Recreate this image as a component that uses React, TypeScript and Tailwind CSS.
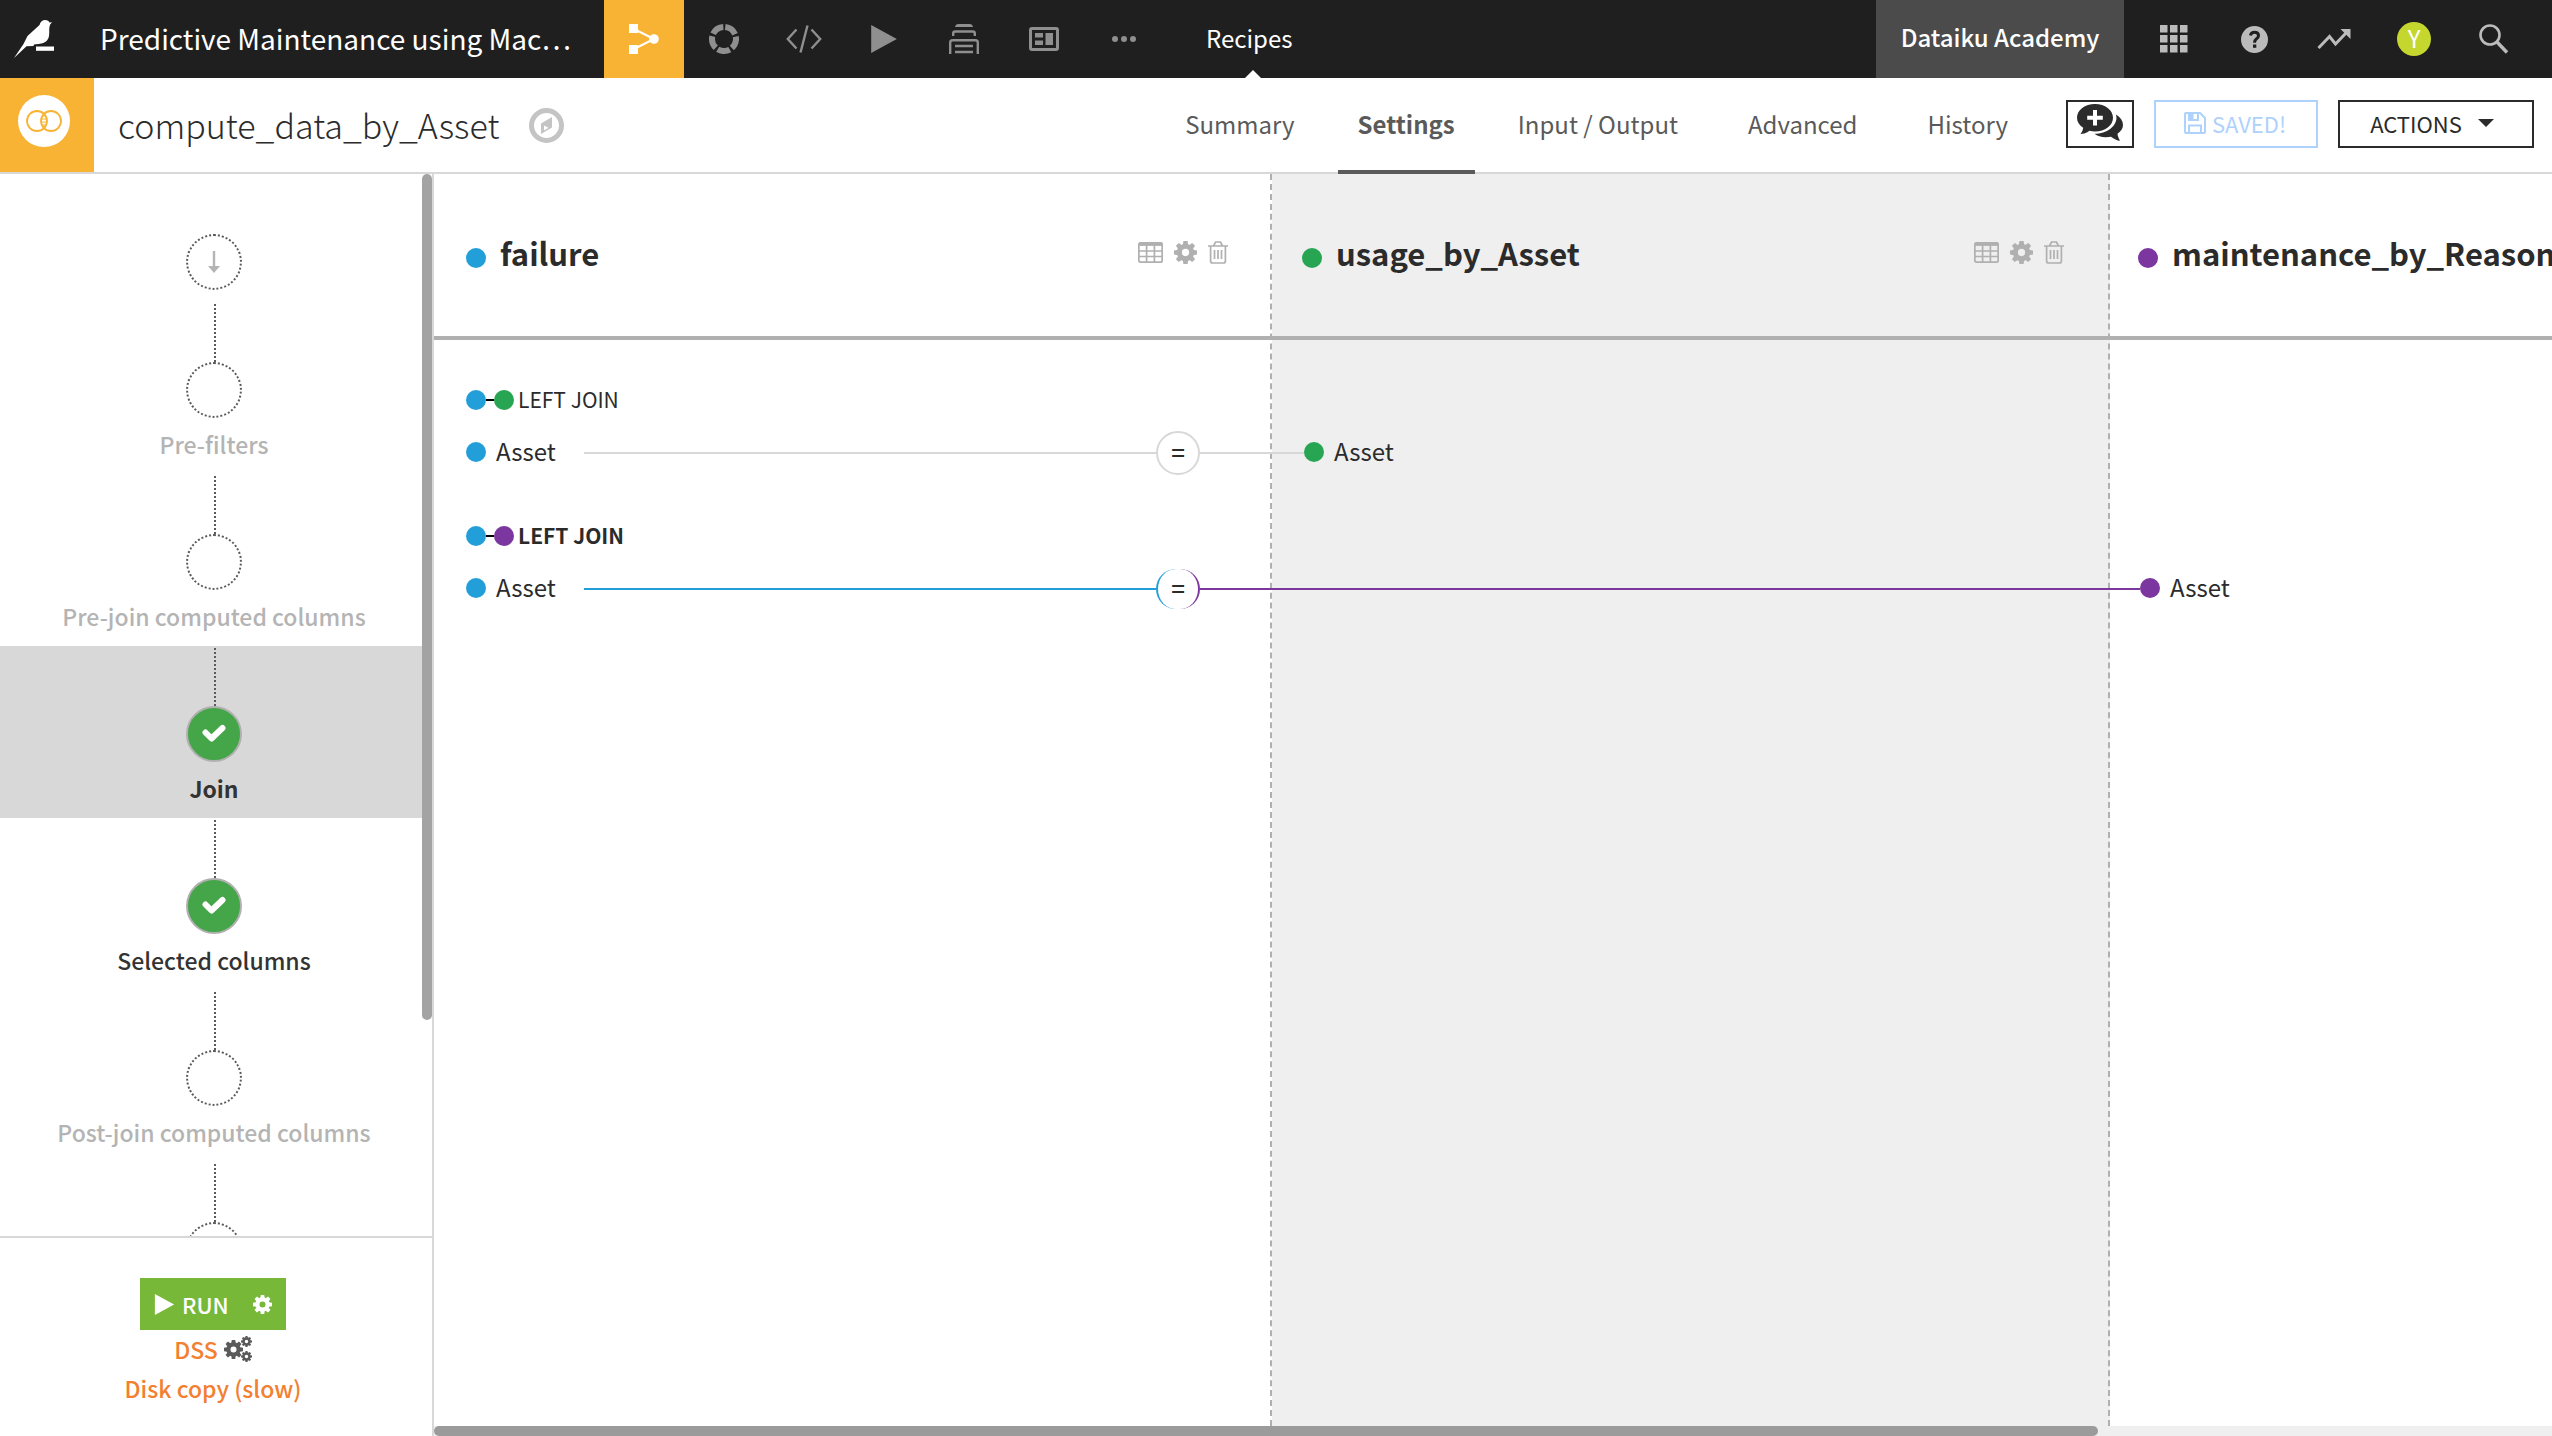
import React, { useState } from 'react';

interface Step {
  id: string;
  label: string;
  done: boolean;
}

interface Dataset {
  name: string;
  dot: string;
}

const steps: Step[] = [
  { id: 'pre-filters', label: 'Pre-filters', done: false },
  { id: 'pre-join', label: 'Pre-join computed columns', done: false },
  { id: 'join', label: 'Join', done: true },
  { id: 'selected', label: 'Selected columns', done: true },
  { id: 'post-join', label: 'Post-join computed columns', done: false },
  { id: 'last', label: '', done: false }
];

const datasets: Dataset[] = [
  { name: 'failure', dot: 'bg-[#229fd9]' },
  { name: 'usage_by_Asset', dot: 'bg-[#27a552]' },
  { name: 'maintenance_by_Reason', dot: 'bg-[#7b379f]' }
];

const tabs = ['Summary', 'Settings', 'Input / Output', 'Advanced', 'History'];

const BirdLogo = () => (
  <svg width="40" height="38" viewBox="0 0 40 38" fill="#fff" aria-hidden="true">
    <path d="M0 38 L9.500 24 L13.500 16 L25.500 5 C26.500 1.500 28.500 0 31 0 C33.500 0 35 1.200 35.500 2.500 L38 2.300 L36 4.800 C34.500 9 35.800 12 35 16 C34 21.500 30 24 22 24.200 L20 24.500 L19.500 26 L12.500 26.200 Z" />
    <rect x="22" y="26.500" width="18" height="4.300" />
  </svg>
);

const FlowIcon = () => (
  <svg width="30" height="30" viewBox="0 0 30 30" fill="#fff" aria-hidden="true">
    <path d="M5 5 L25 15 L5 25" fill="none" stroke="#fff" strokeWidth="2" />
    <rect width="9" height="9" />
    <rect y="21" width="9" height="9" />
    <circle cx="25" cy="15" r="4.800" />
  </svg>
);

const RingIcon = () => (
  <svg width="30" height="30" viewBox="0 0 30 30" aria-hidden="true">
    <circle
      cx="15"
      cy="15"
      r="12"
      fill="none"
      stroke="currentColor"
      strokeWidth="6"
      strokeDasharray="12.600 2.480"
      transform="rotate(-84 15 15)"
    />
  </svg>
);

const CodeIcon = () => (
  <svg width="36" height="28" viewBox="0 0 36 28" fill="none" stroke="currentColor" strokeWidth="2.400" aria-hidden="true">
    <path d="M10.500 4.500 L1.800 14 L10.500 23.500 M25.500 4.500 L34.200 14 L25.500 23.500 M21.500 0.500 L14.500 27.500" />
  </svg>
);

const PlayIcon = ({ size }: { size: number }) => (
  <svg width={size} height={size} viewBox="0 0 24 24" fill="currentColor" aria-hidden="true">
    <path d="M1 0 L23 12 L1 24 Z" />
  </svg>
);

const StackIcon = () => (
  <svg width="30" height="30" viewBox="0 0 30 30" fill="none" stroke="currentColor" strokeWidth="2.400" aria-hidden="true">
    <path d="M1.200 30 V18.500 Q1.200 16.200 3.500 16.200 H26.500 Q28.800 16.200 28.800 18.500 V30" />
    <path d="M4.200 12 V9.500 Q4.200 7.500 6.200 7.500 H23.800 Q25.800 7.500 25.800 9.500 V12" />
    <path d="M6 22 H24 M6 28 H24" />
    <path d="M6 3 Q6.500 0 9.500 0 H20.500 Q23.500 0 24 3 Z" fill="currentColor" stroke="none" />
  </svg>
);

const DashboardIcon = () => (
  <svg width="30" height="24" viewBox="0 0 30 24" fill="currentColor" aria-hidden="true">
    <rect x="1.500" y="1.500" width="27" height="21" rx="1.500" fill="none" stroke="currentColor" strokeWidth="3" />
    <rect x="6" y="6" width="8" height="4.500" />
    <rect x="6" y="13.500" width="8" height="4.500" />
    <rect x="16.500" y="6" width="7.500" height="12" />
  </svg>
);

const MoreIcon = () => (
  <svg width="24" height="6" viewBox="0 0 24 6" fill="currentColor" aria-hidden="true">
    <circle cx="3" cy="3" r="3" />
    <circle cx="12" cy="3" r="3" />
    <circle cx="21" cy="3" r="3" />
  </svg>
);

const AppsIcon = () => (
  <svg width="28" height="28" viewBox="0 0 28 28" fill="currentColor" aria-hidden="true">
    {[0, 10, 20].map(y => [0, 10, 20].map(x => <rect key={`${x}-${y}`} x={x} y={y} width="7.500" height="7.500" />))}
  </svg>
);

const HelpIcon = () => (
  <svg width="27" height="27" viewBox="0 0 27 27" aria-hidden="true">
    <circle cx="13.500" cy="13.500" r="13.500" fill="currentColor" />
    <path d="M9.500 9.500 Q10 6.200 13.500 6.200 Q17.500 6.200 17.500 9.700 Q17.500 11.500 15.300 13 Q13.600 14.200 13.600 16.800" fill="none" stroke="#1f1f1f" strokeWidth="3" />
    <rect x="12" y="18.500" width="3.300" height="3.300" fill="#1f1f1f" />
  </svg>
);

const TrendIcon = () => (
  <svg width="34" height="22" viewBox="0 0 34 22" aria-hidden="true">
    <path d="M1.500 20 L12.500 8.500 L18.500 16 L29 5" fill="none" stroke="currentColor" strokeWidth="3" />
    <path d="M23.500 1 H33.500 V11 Z" fill="currentColor" />
  </svg>
);

const SearchIcon = () => (
  <svg width="30" height="30" viewBox="0 0 30 30" fill="none" stroke="currentColor" aria-hidden="true">
    <circle cx="11" cy="11" r="9.500" strokeWidth="2.600" />
    <path d="M18 18 L28 28.500" strokeWidth="3.400" />
  </svg>
);

const JoinIcon = () => (
  <svg width="36" height="22" viewBox="0 0 36 22" fill="none" stroke="#f8b334" aria-hidden="true">
    <circle cx="11" cy="11" r="10" strokeWidth="1.800" />
    <circle cx="25" cy="11" r="10" strokeWidth="1.800" />
    <path d="M16.500 6 H19.500 M15.500 9 H20.500 M15.500 12 H20.500 M16.500 15 H19.500" strokeWidth="1" />
  </svg>
);

const CompassIcon = () => (
  <svg width="35" height="35" viewBox="0 0 35 35" aria-hidden="true">
    <circle cx="17.500" cy="17.500" r="15" fill="none" stroke="#c4c4c4" strokeWidth="5" />
    <path d="M23 9 V19.500 L12 26 V15.500 Z M15 17.500 V22.500 L19.500 19.800 Z" fill="#c4c4c4" fillRule="evenodd" />
  </svg>
);

const ChatPlusIcon = () => (
  <svg width="46" height="37" viewBox="0 0 46 37" fill="#2b2b2b" aria-hidden="true">
    <path d="M18 0 C28 0 36 6 36 13.800 C36 21.500 28 27.500 18 27.500 C16 27.500 14.300 27.300 12.500 26.800 C9.500 29 6.500 30 3.500 30 C5 28 6 26 6.200 23.800 C2.300 21.300 0 17.800 0 13.800 C0 6 8 0 18 0 Z" />
    <path d="M39 10.500 C43.500 13.500 46 17 46 20.800 C46 24.500 44 27.500 40.500 29.700 C40.700 32 41.700 34.500 43 36.800 C40 36.500 37 35 34 32.700 C27 34 21 32.500 17.500 29.800 C30 29.500 39.500 22.500 39.500 13.500 Z" />
    <path d="M18 6 V21.500 M10.200 13.800 H25.800" stroke="#fff" strokeWidth="4" />
  </svg>
);

const SaveIcon = () => (
  <svg width="22" height="22" viewBox="0 0 22 22" fill="none" stroke="currentColor" strokeWidth="2" aria-hidden="true">
    <path d="M1 2 Q1 1 2 1 H16 L21 6 V20 Q21 21 20 21 H2 Q1 21 1 20 Z" />
    <path d="M5 21 V13.500 H17 V21 M5 1 V8 H14 V1" />
    <rect x="5" y="2" width="4.500" height="5.500" fill="currentColor" stroke="none" />
  </svg>
);

const teeth = [0, 45, 90, 135, 180, 225, 270, 315];

const Gear = ({ size }: { size: number }) => (
  <svg width={size} height={size} viewBox="0 0 22 22" fill="currentColor" aria-hidden="true">
    {teeth.map(angle => (
      <path key={angle} d="M8.400 4 L9 0 H13 L13.600 4 Z" transform={`rotate(${angle} 11 11)`} />
    ))}
    <circle cx="11" cy="11" r="5.900" fill="none" stroke="currentColor" strokeWidth="4.800" />
  </svg>
);

const GearsIcon = () => (
  <span className="flex items-center text-[#5a5a5a]">
    <Gear size={19} />
    <span className="-ml-[2px] flex flex-col gap-1">
      <Gear size={11} />
      <Gear size={11} />
    </span>
  </span>
);

const TableIcon = () => (
  <svg width="25" height="21" viewBox="0 0 25 21" fill="none" stroke="currentColor" aria-hidden="true">
    <rect x="0.800" y="0.800" width="23.400" height="19.400" rx="2" strokeWidth="1.800" />
    <path d="M1 2.200 H24" strokeWidth="3.400" />
    <path d="M1 9 H24 M1 14.500 H24 M8.600 3 V20 M16.400 3 V20" strokeWidth="1.700" />
  </svg>
);

const TrashIcon = () => (
  <svg width="20" height="23" viewBox="0 0 20 23" fill="none" stroke="currentColor" strokeWidth="1.700" aria-hidden="true">
    <path d="M0 5 H20 M5.500 5 L7.500 1 H12.500 L14.500 5" />
    <path d="M2.600 5 V20 Q2.600 22 4.600 22 H15.400 Q17.400 22 17.400 20 V5" />
    <path d="M6.500 9 V18 M10 9 V18 M13.500 9 V18" />
  </svg>
);

const CheckIcon = () => (
  <svg width="26" height="20" viewBox="0 0 26 20" fill="none" stroke="#fff" strokeWidth="6" strokeLinecap="round" strokeLinejoin="round" aria-hidden="true">
    <path d="M4.500 8.500 L10.500 14.500 L21.500 4" />
  </svg>
);

const ArrowDownIcon = () => (
  <svg width="12" height="22" viewBox="0 0 12 22" fill="#b4b4b4" aria-hidden="true">
    <path d="M4.800 0 H7.200 V15 H12 L6 22 L0 15 H4.800 Z" />
  </svg>
);

const navIcons = [
  { label: 'Lab', icon: <RingIcon /> },
  { label: 'Code', icon: <CodeIcon /> },
  { label: 'Jobs', icon: <PlayIcon size={28} /> },
  { label: 'Wiki', icon: <StackIcon /> },
  { label: 'Dashboards', icon: <DashboardIcon /> },
  { label: 'More', icon: <MoreIcon /> }
];

const TopBar: React.FC = () => (
  <header className="flex h-[78px] shrink-0 items-stretch bg-[#1f1f1f] text-white">
    <a href="#home" aria-label="Home" className="flex w-[100px] items-center pl-[14px]">
      <BirdLogo />
    </a>
    <a href="#project" className="flex w-[504px] items-center pb-[2px] text-[28px] whitespace-nowrap">
      Predictive Maintenance using Mac…
    </a>
    <nav className="flex text-[#8f8f8f]">
      <button aria-label="Flow" className="flex w-20 items-center justify-center bg-[#f8b334]">
        <FlowIcon />
      </button>
      {navIcons.map(item => (
        <button key={item.label} aria-label={item.label} className="flex w-20 items-center justify-center">
          {item.icon}
        </button>
      ))}
    </nav>
    <a href="#recipes" className="relative flex items-center pr-[50px] pb-[2px] pl-[42px] text-2xl">
      Recipes
      <span className="absolute bottom-0 left-1/2 -translate-x-1/2 border-x-8 border-b-8 border-x-transparent border-b-white"></span>
    </a>
    <div className="ml-auto flex">
      <a href="#academy" className="flex w-[248px] items-center justify-center bg-[#4b4b4b] pb-1 text-2xl font-medium">
        Dataiku Academy
      </a>
      <div className="flex pr-[18px] pl-[10px] text-[#bbbbbb]">
        <button aria-label="Applications" className="flex w-20 items-center justify-center"><AppsIcon /></button>
        <button aria-label="Help" className="flex w-20 items-center justify-center"><HelpIcon /></button>
        <button aria-label="Activity" className="flex w-20 items-center justify-center"><TrendIcon /></button>
        <button className="flex w-20 items-center justify-center">
          <span className="flex size-[34px] items-center justify-center rounded-full bg-[#c5d72e] pb-[2px] text-2xl leading-none text-white">Y</span>
        </button>
        <button aria-label="Search" className="flex w-20 items-center justify-center"><SearchIcon /></button>
      </div>
    </div>
  </header>
);

const RecipeBar: React.FC = () => {
  const [activeTab, setActiveTab] = useState('Settings');

  return (
    <div className="flex h-24 shrink-0 border-b-2 border-[#d8d8d8] bg-white">
      <div className="flex w-[94px] justify-center bg-[#f8b334] pt-[17px] pr-[6px]">
        <span className="flex size-[52px] items-center justify-center rounded-full bg-white">
          <JoinIcon />
        </span>
      </div>
      <div className="flex items-center gap-[30px] pl-6">
        <h1 className="text-[34px] leading-none font-light text-[#2b2b2b]">compute_data_by_Asset</h1>
        <button aria-label="Navigate"><CompassIcon /></button>
      </div>
      <nav className="ml-auto flex h-24 text-2xl text-[#5a5a5a]">
        {tabs.map(tab => (
          <button
            key={tab}
            onClick={() => setActiveTab(tab)}
            className={`border-b-4 ${
              activeTab === tab ? 'mx-2 border-[#5a5a5a] px-5 font-bold' : 'mx-[11px] border-transparent px-6'
            }`}
          >
            {tab}
          </button>
        ))}
      </nav>
      <div className="flex items-start gap-5 pt-[22px] pr-[18px] pl-[23px] text-[22px] leading-none">
        <button aria-label="Discussions" className="flex h-12 w-[68px] items-center justify-center border-2 border-[#2b2b2b] pb-1">
          <ChatPlusIcon />
        </button>
        <button className="flex h-12 w-[164px] items-center justify-center gap-[6px] border-2 border-[#aed2fb] pr-[2px] pb-[2px] text-[#aed2fb]">
          <SaveIcon />
          SAVED!
        </button>
        <button className="flex h-12 w-[196px] items-center justify-center gap-4 border-2 border-[#2b2b2b] pr-2 pb-[2px] text-[#2b2b2b]">
          ACTIONS
          <span className="border-x-8 border-t-8 border-x-transparent border-t-[#2b2b2b]"></span>
        </button>
      </div>
    </div>
  );
};

const Sidebar: React.FC = () => {
  const [activeStep, setActiveStep] = useState('join');

  return (
    <aside className="flex w-[434px] shrink-0 flex-col border-r-2 border-[#d8d8d8] bg-white">
      <div className="relative min-h-0 flex-1 overflow-hidden">
        <div className="flex justify-center pt-[60px] pr-1 pb-3">
          <span className="flex size-14 items-center justify-center rounded-full border-2 border-dotted border-[#5a5a5a]">
            <ArrowDownIcon />
          </span>
        </div>
        {steps.map(step => (
          <button
            key={step.id}
            onClick={() => setActiveStep(step.id)}
            className={`flex h-[172px] w-full flex-col items-center pt-[2px] pr-1 text-[23px] ${
              activeStep === step.id ? 'bg-[#d8d8d8] font-bold' : 'font-medium'
            } ${step.done ? 'text-[#333333]' : 'text-[#b4b4b4]'}`}
          >
            <span className="ml-[2px] h-[58px] shrink-0 border-l-2 border-dotted border-[#5a5a5a]"></span>
            <span
              className={`flex size-14 shrink-0 items-center justify-center rounded-full border-2 ${
                step.done ? 'border-[#b0b0b0] bg-[#45a549]' : 'border-dotted border-[#5a5a5a]'
              }`}
            >
              {step.done && <CheckIcon />}
            </span>
            <span className="mt-[6px] leading-10">{step.label}</span>
          </button>
        ))}
        <div className="absolute top-0 right-0 h-[846px] w-[10px] rounded-full bg-[#a3a3a3]"></div>
      </div>
      <div className="flex h-[200px] shrink-0 flex-col items-center border-t-2 border-[#d8d8d8] pt-10 pr-[6px] text-[23px] font-medium text-[#f28030]">
        <div className="flex h-[52px] w-[146px] items-center bg-[#77b839] pl-[14px] text-[22px] text-white">
          <button className="flex items-center gap-[7px]">
            <PlayIcon size={21} />
            RUN
          </button>
          <button aria-label="Run options" className="ml-auto pr-[14px]">
            <Gear size={19} />
          </button>
        </div>
        <a href="#engine" className="flex items-center gap-[6px] leading-[38px]">
          DSS
          <GearsIcon />
        </a>
        <a href="#engine-detail" className="leading-10">Disk copy (slow)</a>
      </div>
    </aside>
  );
};

const Dot = ({ color }: { color: string }) => <span className={`size-5 shrink-0 rounded-full ${color}`}></span>;

const JoinTitle = ({ right, bold }: { right: string; bold?: boolean }) => (
  <button className={`flex h-7 items-center text-[21px] leading-7 ${bold ? 'font-bold' : ''}`}>
    <Dot color="bg-[#229fd9]" />
    <span className="h-[2px] w-2 bg-black"></span>
    <Dot color={right} />
    <span className="pb-[2px] pl-1">LEFT JOIN</span>
  </button>
);

const ColumnRef = ({ color, name }: { color: string; name: string }) => (
  <span className="flex items-center gap-[10px] pb-[2px]">
    <Dot color={color} />
    <span className="pb-[2px] leading-8">{name}</span>
  </span>
);

const JoinCanvas: React.FC = () => (
  <main className="flex min-w-0 flex-1 flex-col bg-white text-[#2b2b2b]">
    <div className="relative min-h-0 flex-1 overflow-hidden">
      {/* Dataset lanes */}
      <div className="absolute inset-0 flex">
        <div className="w-[838px] shrink-0 border-r-2 border-dashed border-[#b0b0b0]"></div>
        <div className="w-[838px] shrink-0 border-r-2 border-dashed border-[#b0b0b0] bg-[#efefef]"></div>
      </div>

      <div className="relative flex h-[166px] border-b-4 border-[#b0b0b0]">
        {datasets.map(dataset => (
          <div key={dataset.name} className="flex w-[836px] shrink-0 justify-between pt-[60px] pr-[42px] pl-8">
            <div className="flex h-10 items-center gap-[14px]">
              <span className="pt-2"><span className={`block size-5 rounded-full ${dataset.dot}`}></span></span>
              <h2 className="pb-[2px] text-[31px] leading-10 font-bold">{dataset.name}</h2>
            </div>
            <div className="flex h-9 items-center gap-[11px] text-[#b0b0b0]">
              <button aria-label="Explore"><TableIcon /></button>
              <button aria-label="Edit"><Gear size={23} /></button>
              <button aria-label="Remove"><TrashIcon /></button>
            </div>
          </div>
        ))}
      </div>

      <div className="relative flex flex-col gap-12 pt-[46px] pl-8 text-2xl">
        <div>
          <JoinTitle right="bg-[#27a552]" />
          <div className="mt-[18px] flex h-[42px] items-center">
            <div className="w-[118px]"><ColumnRef color="bg-[#229fd9]" name="Asset" /></div>
            <span className="h-[2px] w-[572px] bg-[#d8d8d8]"></span>
            <button className="size-11 rounded-full border-2 border-[#d8d8d8] bg-white pb-[2px] leading-none font-medium">=</button>
            <span className="h-[2px] w-[104px] bg-[#d8d8d8]"></span>
            <ColumnRef color="bg-[#27a552]" name="Asset" />
          </div>
        </div>
        <div>
          <JoinTitle right="bg-[#7b379f]" bold />
          <div className="mt-[18px] flex h-[42px] items-center">
            <div className="w-[118px]"><ColumnRef color="bg-[#229fd9]" name="Asset" /></div>
            <span className="h-[2px] w-[572px] bg-[#229fd9]"></span>
            <button className="h-10 w-11 rounded-full border-x-2 border-r-[#7b379f] border-l-[#229fd9] bg-white pb-[2px] leading-none font-medium">=</button>
            <span className="h-[2px] w-[940px] shrink-0 bg-[#7b379f]"></span>
            <ColumnRef color="bg-[#7b379f]" name="Asset" />
          </div>
        </div>
      </div>
    </div>
    <div className="h-[10px] shrink-0 bg-[#efefef]">
      <div className="h-full w-[1664px] rounded-full bg-[#9b9b9b]"></div>
    </div>
  </main>
);

const App: React.FC = () => {
  return (
    <div className="flex h-screen flex-col overflow-hidden font-['Noto_Sans_CJK_SC','Open_Sans',sans-serif]">
      <TopBar />
      <RecipeBar />
      <div className="flex min-h-0 flex-1">
        <Sidebar />
        <JoinCanvas />
      </div>
    </div>
  );
};

export default App;
